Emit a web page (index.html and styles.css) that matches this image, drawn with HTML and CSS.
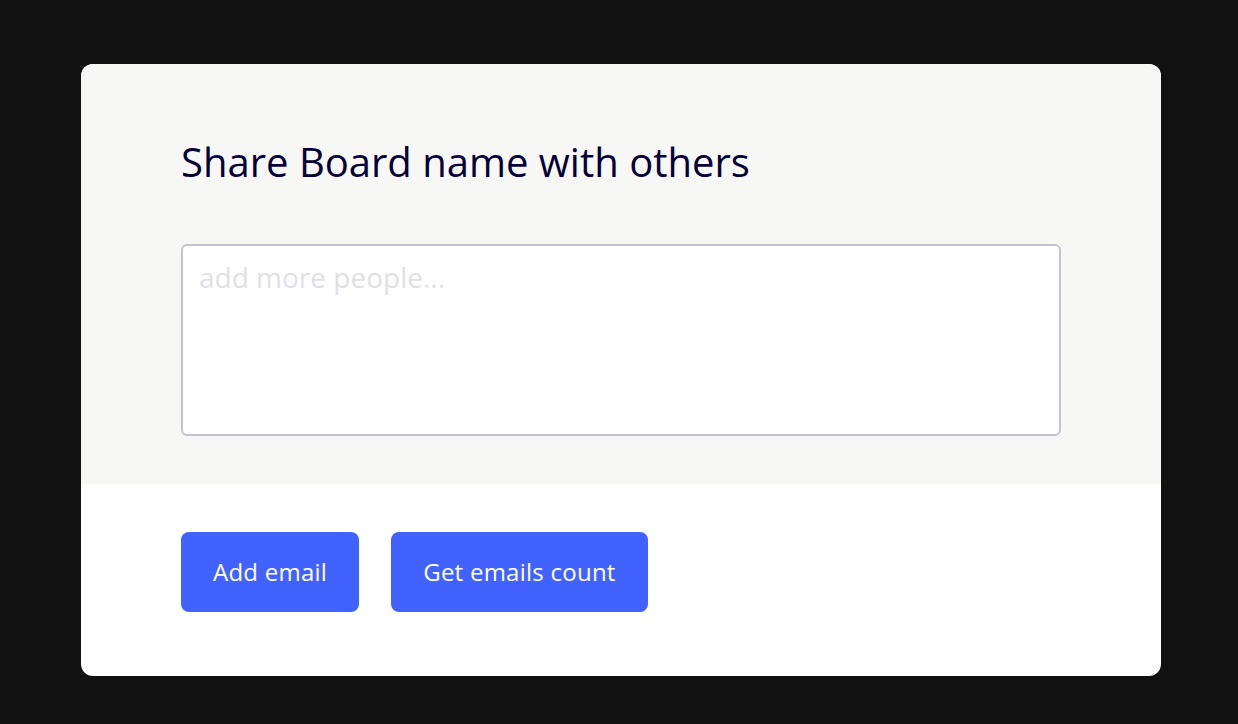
FILE: index.html
```html
<!DOCTYPE html>
<html lang="en">
<head>
<meta charset="utf-8">
<title>Share Board</title>
<link rel="stylesheet" href="styles.css">
</head>
<body>
<div class="modal">
  <div class="modal-top">
    <h1 class="title">Share Board name with others</h1>
    <textarea class="emails" placeholder="add more people..."></textarea>
  </div>
  <div class="modal-bottom">
    <button class="btn">Add email</button>
    <button class="btn">Get emails count</button>
  </div>
</div>
</body>
</html>
```
FILE: styles.css
```css
* { box-sizing: border-box; }
html, body { margin: 0; height: 100%; }
body {
  background: #111111;
  font-family: "Open Sans", "Noto Sans", sans-serif;
  padding: 64px 0 0 81px;
}
.modal {
  width: 1080px;
  height: 612px;
  background: #ffffff;
  border-radius: 12px;
  overflow: hidden;
  display: flex;
  flex-direction: column;
}
.modal-top {
  background: #f7f7f5;
  height: 420px;
  padding: 72px 100px 48px;
  display: flex;
  flex-direction: column;
}
.title {
  margin: 0 0 56px;
  font-size: 40px;
  font-weight: 400;
  line-height: 52px;
  color: #050038;
}
.emails {
  width: 880px;
  height: 192px;
  border: 2px solid #c3c2cf;
  border-radius: 6px;
  padding: 11px 16px;
  font-family: inherit;
  font-size: 28px;
  line-height: 40px;
  color: #050038;
  background: #ffffff;
  resize: none;
  outline: none;
}
.emails::placeholder { color: #e0dfe8; }
.modal-bottom {
  padding: 48px 100px 64px;
  display: flex;
  gap: 32px;
}
.btn {
  height: 80px;
  padding: 0 32px 2px;
  border: none;
  border-radius: 8px;
  background: #4262ff;
  color: #ffffff;
  font-family: inherit;
  font-size: 24px;
  letter-spacing: 0.25px;
}
```
